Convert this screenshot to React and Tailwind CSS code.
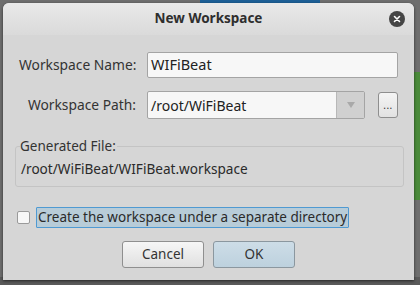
import React from "react";

export default function App() {
  const font = { fontFamily: '"Noto Sans", "Open Sans", sans-serif' };
  return (
    <div className="relative w-[420px] h-[285px] bg-[#6e6e6e] overflow-hidden" style={font}>
      <div className="absolute left-[200px] top-0 w-[120px] h-[4px] bg-[#1d5f96]" />
      <div className="absolute right-0 top-[72px] w-[8px] h-[128px] bg-[#4a8a3a]" />
      <div className="absolute left-0 bottom-0 w-full h-[8px] bg-[#5a5a5a]" />
      <div className="relative pt-[3px] pl-[3px]">
        <div className="w-[411px] h-[277px] rounded-t-[6px] bg-[#d6d6d6] shadow-[0_1px_3px_rgba(0,0,0,0.6)] flex flex-col text-[13.8px] text-[#333]">
          <div className="h-[32px] rounded-t-[6px] bg-gradient-to-b from-[#e9e9e9] to-[#dadada] flex items-center justify-center relative">
            <span className="font-bold text-[13.5px] text-[#2e2e2e] mt-[-1px]">New Workspace</span>
            <div className="absolute right-[9px] top-[8px] w-[16px] h-[16px] rounded-full bg-[#454545] flex items-center justify-center">
              <svg width="8" height="8" viewBox="0 0 8 8">
                <path d="M1.5 1.5 L6.5 6.5 M6.5 1.5 L1.5 6.5" stroke="#fff" strokeWidth="1.6" strokeLinecap="round" />
              </svg>
            </div>
          </div>
          <div className="pl-[16px] pr-[15px] pt-[17px] flex flex-col">
            <div className="flex items-center">
              <div className="w-[117px] text-right whitespace-nowrap">Workspace Name:</div>
              <div className="ml-[11px] w-[251px] h-[26px] bg-[#f7f7f7] border border-[#a4a4a4] rounded-[2px] flex items-center pl-[3px] text-[14.5px] text-[#222]">
                WIFiBeat
              </div>
            </div>
            <div className="flex items-center mt-[13px]">
              <div className="w-[117px] text-right whitespace-nowrap">Workspace Path:</div>
              <div className="ml-[11px] w-[218px] h-[28px] bg-[#f7f7f7] border border-[#a4a4a4] rounded-[2px] flex items-center text-[14px] text-[#222]">
                <span className="pl-[3px] flex-1">/root/WiFiBeat</span>
                <div className="w-[28px] h-full bg-[#d0d0d0] border-l border-[#b8b8b8] flex items-center justify-center">
                  <svg width="8" height="6" viewBox="0 0 8 6">
                    <path d="M0 0 L8 0 L4 6 Z" fill="#a9a9a9" />
                  </svg>
                </div>
              </div>
              <div className="ml-[13px] w-[20px] h-[26px] bg-gradient-to-b from-[#f4f4f4] to-[#e2e2e2] border border-[#8e8e8e] rounded-[3px] flex items-end justify-center pb-[7px]">
                <span className="text-[10px] leading-none tracking-[0.5px]">...</span>
              </div>
            </div>
            <div className="relative mt-[27px] ml-[-4px] w-[389px] h-[41px] border border-[#c4c4c4] rounded-[3px]">
              <span className="absolute left-[4px] top-[-10px] bg-[#d6d6d6] pr-[1px] leading-[18px] text-[13.5px]">Generated File:</span>
              <div className="pl-[5px] pt-[13px] leading-[18px] text-[#2a2a2a] text-[13.6px]">/root/WiFiBeat/WIFiBeat.workspace</div>
            </div>
            <div className="flex items-center mt-[20px] ml-[-2px]">
              <div className="w-[13px] h-[13px] bg-[#f7f7f7] border border-[#9a9a9a] rounded-[2px]" />
              <div className="ml-[6px] h-[21px] px-[1px] bg-[#b8ccd8] border border-[#4f9ad2] rounded-[1px] flex items-center text-[13.5px] text-[#2a2a2a]">
                Create the workspace under a separate directory
              </div>
            </div>
            <div className="flex mt-[13px] ml-[103px] gap-[9px]">
              <div className="w-[82px] h-[27px] bg-gradient-to-b from-[#f6f6f6] to-[#e0e0e0] border border-[#8f8f8f] rounded-[3px] flex items-center justify-center text-[13.5px]">
                Cancel
              </div>
              <div className="w-[82px] h-[27px] bg-gradient-to-b from-[#cddde7] to-[#bdd1de] border border-[#8b979f] rounded-[3px] flex items-center justify-center text-[13.5px]">
                OK
              </div>
            </div>
          </div>
        </div>
      </div>
    </div>
  );
}
